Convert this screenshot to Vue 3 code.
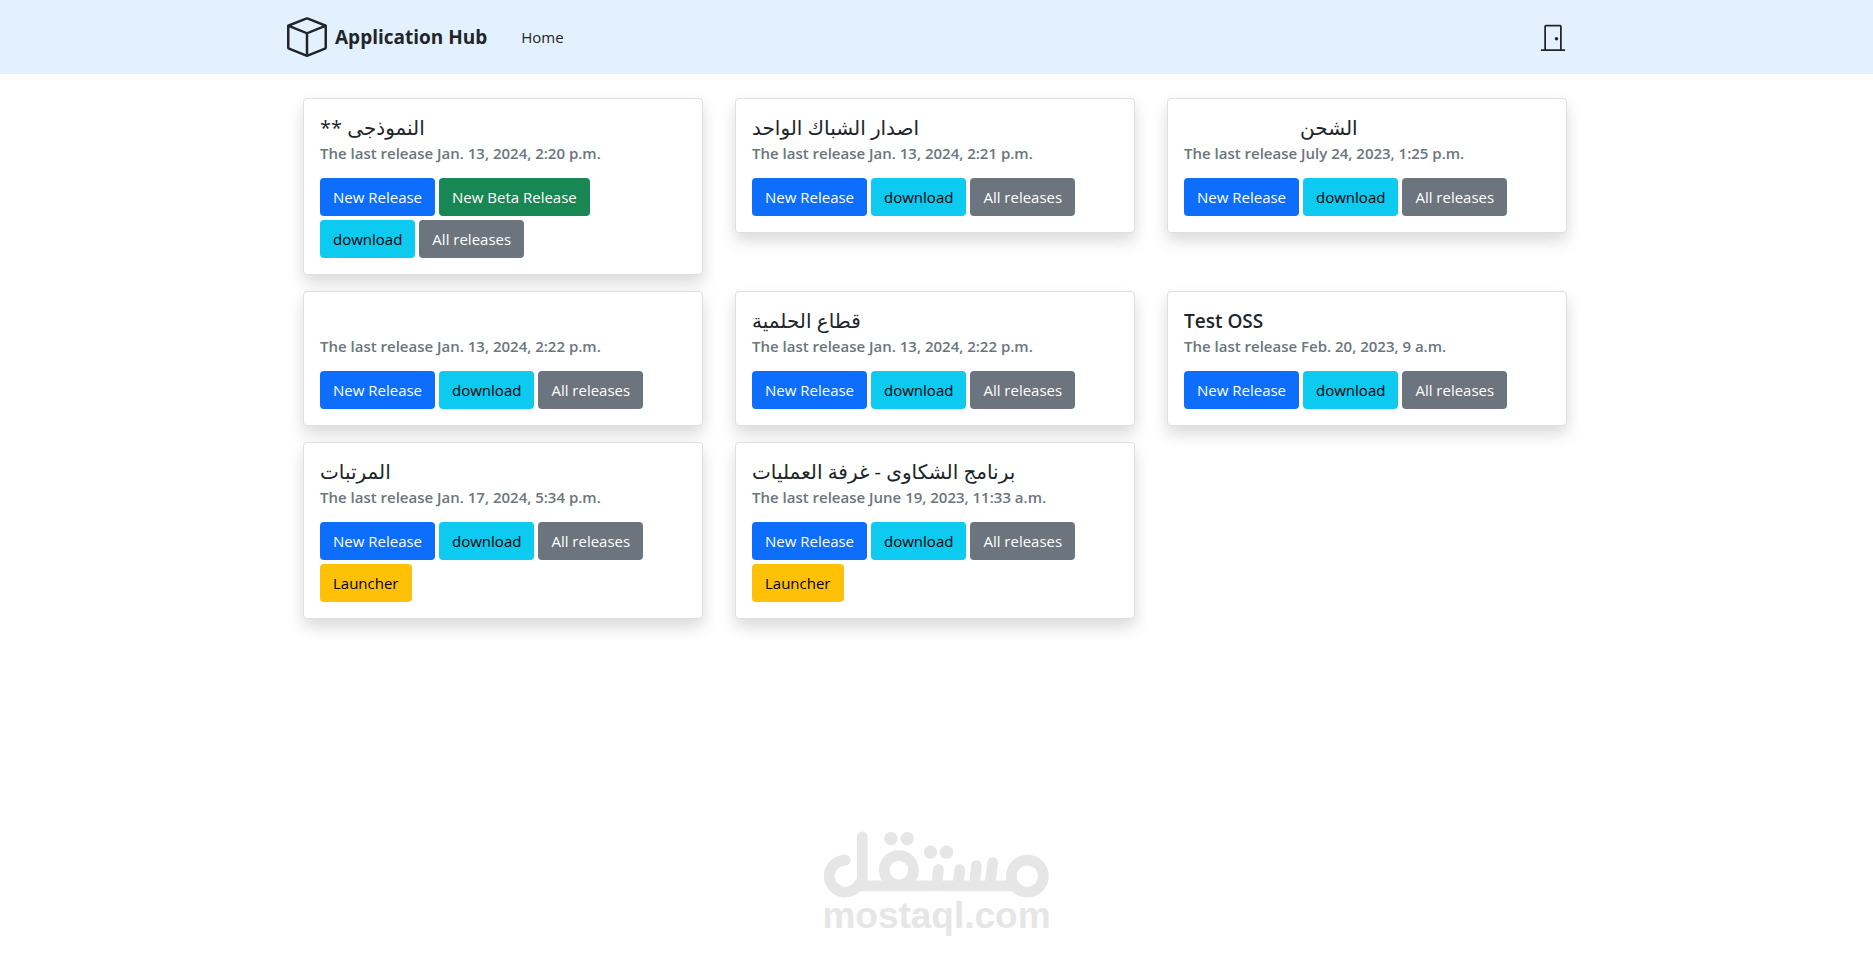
<template>
  <div class="page">

    <!-- Navbar -->
    <header class="navbar">
      <div class="container navbar-inner">
        <a href="#" class="brand">
          <svg class="brand-icon" viewBox="0 0 16 16" fill="currentColor" aria-hidden="true">
            <path d="M8.186 1.113a.5.5 0 0 0-.372 0L1.846 3.5 8 5.961 14.154 3.5 8.186 1.113zM15 4.239l-6.5 2.6v7.922l6.5-2.6V4.24zM7.5 14.762V6.838L1 4.239v7.923l6.5 2.6zM7.443.184a1.5 1.5 0 0 1 1.114 0l7.129 2.852A.5.5 0 0 1 16 3.5v8.662a1 1 0 0 1-.629.928l-7.185 2.874a.5.5 0 0 1-.372 0L.63 13.09a1 1 0 0 1-.63-.928V3.5a.5.5 0 0 1 .314-.464L7.443.184z" />
          </svg>
          <span>Application Hub</span>
        </a>
        <nav class="nav-links">
          <a href="#">Home</a>
        </nav>
        <a href="#" class="logout" aria-label="Logout">
          <svg viewBox="0 0 16 16" fill="currentColor" aria-hidden="true">
            <path d="M3 2a1 1 0 0 1 1-1h8a1 1 0 0 1 1 1v13h1.5a.5.5 0 0 1 0 1h-13a.5.5 0 0 1 0-1H3V2zm1 13h8V2H4v13z" />
            <path d="M9 9a1 1 0 1 0 2 0 1 1 0 0 0-2 0z" />
          </svg>
        </a>
      </div>
    </header>

    <!-- Applications -->
    <main class="container app-grid">
      <article v-for="app in apps" :key="app.id" class="card">
        <h5 :class="['card-title', { arabic: app.arabic, indented: app.indented }]">{{ app.name }}</h5>
        <h6 class="card-subtitle">The last release {{ app.lastRelease }}</h6>
        <div class="actions">
          <a
            v-for="key in app.actions"
            :key="key"
            href="#"
            :class="['btn', ACTIONS[key].style]"
          >{{ ACTIONS[key].label }}</a>
        </div>
      </article>
    </main>

    <!-- Watermark -->
    <footer class="watermark">
      <svg viewBox="72 65 676 200" aria-hidden="true">
        <g fill="none" stroke="currentColor" stroke-width="32" stroke-linecap="round">
          <path d="M136 152A48 48 0 1 0 178 223" />
          <path d="M187 82V229" />
          <path d="M176 229H643" stroke-linecap="butt" />
          <circle cx="297" cy="182" r="44" />
          <circle cx="683" cy="200" r="48" />
          <path d="M416 180L411 224" />
          <path d="M480 180L475 224" />
          <path d="M530 168L524 224" />
          <path d="M579 159L571 224" />
        </g>
        <g fill="currentColor">
          <circle cx="273" cy="87" r="20" />
          <circle cx="322" cy="87" r="20" />
          <circle cx="392" cy="128" r="20" />
          <circle cx="440" cy="128" r="20" />
        </g>
      </svg>
      <span>mostaql.com</span>
    </footer>

  </div>
</template>

<script setup>
import { ref } from 'vue'

const ACTIONS = {
  release:  { label: 'New Release',      style: 'btn-primary' },
  beta:     { label: 'New Beta Release', style: 'btn-success' },
  download: { label: 'download',         style: 'btn-info' },
  all:      { label: 'All releases',     style: 'btn-secondary' },
  launcher: { label: 'Launcher',         style: 'btn-warning' }
}

const BASE_ACTIONS = ['release', 'download', 'all']

const apps = ref([
  { id: 1, name: '** النموذجى', arabic: true, lastRelease: 'Jan. 13, 2024, 2:20 p.m.', actions: ['release', 'beta', 'download', 'all'] },
  { id: 2, name: 'اصدار الشباك الواحد', arabic: true, lastRelease: 'Jan. 13, 2024, 2:21 p.m.', actions: BASE_ACTIONS },
  { id: 3, name: 'الشحن', arabic: true, indented: true, lastRelease: 'July 24, 2023, 1:25 p.m.', actions: BASE_ACTIONS },
  { id: 4, name: '', lastRelease: 'Jan. 13, 2024, 2:22 p.m.', actions: BASE_ACTIONS },
  { id: 5, name: 'قطاع الحلمية', arabic: true, lastRelease: 'Jan. 13, 2024, 2:22 p.m.', actions: BASE_ACTIONS },
  { id: 6, name: 'Test OSS', lastRelease: 'Feb. 20, 2023, 9 a.m.', actions: BASE_ACTIONS },
  { id: 7, name: 'المرتبات', arabic: true, lastRelease: 'Jan. 17, 2024, 5:34 p.m.', actions: [...BASE_ACTIONS, 'launcher'] },
  { id: 8, name: 'برنامج الشكاوى - غرفة العمليات', arabic: true, lastRelease: 'June 19, 2023, 11:33 a.m.', actions: [...BASE_ACTIONS, 'launcher'] }
])
</script>

<style>
body { margin: 0; background: #fff; }
</style>

<style scoped>
.page {
  display: flex;
  flex-direction: column;
  min-height: 100vh;
  font-family: "Segoe UI", "Open Sans", "Noto Sans", "DejaVu Sans", sans-serif;
  font-size: 15px;
  line-height: 24px;
  color: #212529;
}
.page a { color: inherit; text-decoration: none; }

.container {
  box-sizing: border-box;
  width: 100%;
  max-width: 1323px;
  margin: 0 auto;
  padding: 0 15px 0 12px;
}

/* navbar */
.navbar { background: #e3f1fe; }
.navbar-inner { display: flex; align-items: center; height: 74px; }
.brand {
  display: flex;
  align-items: center;
  gap: 8px;
  font-size: 19px;
  font-weight: bold;
}
.brand-icon { width: 40px; height: 40px; }
.nav-links { margin-left: 34px; }
.logout { display: flex; margin-left: auto; margin-right: 16px; }
.logout svg { width: 28px; height: 28px; }

/* cards */
.app-grid {
  display: grid;
  grid-template-columns: repeat(auto-fill, minmax(360px, 1fr));
  align-items: start;
  gap: 16px 0;
  margin-top: 24px;
}
.card {
  margin: 0 16px;
  padding: 16px;
  background: #fff;
  border: 1px solid #dfdfdf;
  border-radius: 4px;
  box-shadow: 0 8px 16px rgba(0, 0, 0, 0.15);
}
.card-title {
  height: 26px;
  margin: 0 0 3px;
  font-size: 19px;
  line-height: 26px;
  font-weight: 600;
  white-space: nowrap;
}
.card-title.arabic { font-size: 20px; font-weight: 500; }
.card-title.indented { padding-left: 116px; }
.card-subtitle {
  margin: 0 0 15px;
  font-size: 15px;
  line-height: 19px;
  font-weight: 600;
  color: #6c757d;
}

.actions { display: flex; flex-wrap: wrap; gap: 4px; }
.btn {
  padding: 6px 12px;
  border: 1px solid transparent;
  border-radius: 4px;
}
.page .btn-primary   { background: #0d6efd; color: #fff; }
.page .btn-success   { background: #198754; color: #fff; }
.page .btn-info      { background: #0dcaf0; color: #000; }
.page .btn-secondary { background: #6c757d; color: #fff; }
.page .btn-warning   { background: #ffc107; color: #000; }

/* watermark */
.watermark {
  display: flex;
  flex-direction: column;
  align-items: center;
  margin-top: auto;
  padding: 32px 0 21px;
  color: #e6e6e6;
  font-family: "Liberation Sans", Arial, sans-serif;
  font-size: 37px;
  line-height: 36px;
  font-weight: bold;
}
.watermark svg { width: 225px; height: 67px; }
</style>
